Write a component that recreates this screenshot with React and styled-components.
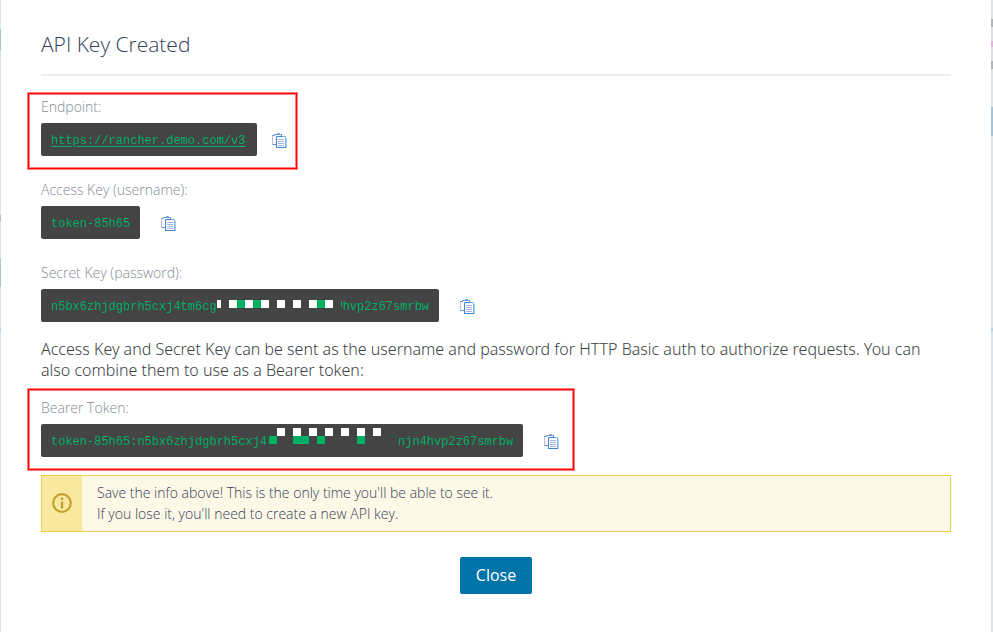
import React from "react";
import styled, { createGlobalStyle } from "styled-components";

const GlobalStyle = createGlobalStyle`
  *, *::before, *::after { box-sizing: border-box; }
  body {
    margin: 0;
    background: #dfe5e5;
    color: #3a3f44;
    font-family: "Open Sans", "Noto Sans", sans-serif;
    font-weight: 300;
  }
`;

const Backdrop = styled.div`
  display: grid;
  grid-template-columns: 1px minmax(0, 1fr) 2px;
  min-height: 100vh;
`;

const LeftEdge = styled.div`
  background: linear-gradient(
    #dfe5e5 29px, #a3c3d6 29px 50px, #d3e0e8 50px 58px, #dfe5e5 58px 180px,
    #e8e3c8 180px 183px, #dfe5e5 183px 215px, #b9babc 215px 221px,
    #dfe5e5 221px 258px, #a3c3d6 258px 287px, #dfe5e5 287px 328px,
    #b5d2e4 328px 331px, #dae3ea 331px 382px, #dfe5e5 382px
  );
`;

const RightEdge = styled.div`
  background: linear-gradient(
    #dfe5e5 19px, #aeb5ba 19px 27px, #dddde6 27px 41px, #dfb5df 41px 47px,
    #dddde6 47px 61px, #aeb5ba 61px 69px, #dfe5e5 69px 107px,
    #a3c3d6 107px 136px, #dfe5e5 136px 328px, #b5d2e4 328px 331px,
    #dae3ea 331px 382px, #dfe5e5 382px
  );
`;

const Modal = styled.main`
  display: flex;
  flex-direction: column;
  padding: 30px 40px 38px;
  background: #fff;
`;

const Title = styled.h1`
  margin: 0 0 17px;
  padding-bottom: 16px;
  border-bottom: 2px solid #eceeee;
  color: #35405a;
  font-size: 21px;
  line-height: 28px;
  font-weight: 300;
`;

const Field = styled.section`
  width: fit-content;
  margin: 0 -13px ${(p) => p.$gap || 7}px;
  padding: ${(p) => p.$top || 3}px ${(p) => p.$inset || 8}px 12px 12px;
  border: 1px solid ${(p) => (p.$marked ? "#ff0000" : "transparent")};
  box-shadow: ${(p) =>
    p.$marked ? "0 0 0 1px #ff8080, inset 0 0 0 1px #ff8080" : "none"};
`;

const Label = styled.h2`
  margin: 0 0 6px;
  color: #848c94;
  font-size: 14px;
  line-height: 20px;
  font-weight: 300;
`;

const Row = styled.div`
  display: flex;
  align-items: center;
  gap: ${(p) => (p.$tight ? 7 : 13)}px;
`;

const Code = styled.code`
  display: flex;
  align-items: center;
  height: 33px;
  padding: 2px 10px 0;
  border-radius: 2px;
  background: #444;
  color: #00ae66;
  font: 12px "Liberation Mono", monospace;
  white-space: nowrap;
`;

const CodeLink = styled.a`
  padding-right: 2px;
  color: inherit;
  text-underline-offset: 2px;
`;

const CopyButton = styled.button`
  display: flex;
  padding: 2px 8px 0;
  border: 0;
  background: none;
  cursor: pointer;
`;

const Hint = styled.p`
  margin: 0 0 8px;
  font-family: "Noto Sans", sans-serif;
  font-size: 16px;
  line-height: 21px;
`;

const Notice = styled.aside`
  display: flex;
  border: 1px solid #f0ce4c;
  background: #fdf9e6;
  color: #35405a;
`;

const NoticeIcon = styled.div`
  display: flex;
  align-items: center;
  justify-content: center;
  width: 40px;
  padding-bottom: 2px;
  background: #f9e8a0;
`;

const NoticeText = styled.p`
  margin: 0;
  padding: 6px 15px 7px;
  font-size: 14px;
  line-height: 21px;
`;

const CloseButton = styled.button`
  align-self: center;
  height: 37px;
  margin-top: 25px;
  padding: 0 16px 2px;
  border: 0;
  border-radius: 2px;
  background: #0074a8;
  color: #fff;
  font: 400 16px "Open Sans", sans-serif;
  cursor: pointer;
`;

function CopyIcon() {
  return (
    <svg width="15" height="15" viewBox="0 0 15 15" fill="none" aria-hidden="true">
      <path d="M4 11.5H.5v-9h2V1.500h7v2" stroke="#5a90dc" />
      <path d="M.5 3v8.500" stroke="#c6b4e2" />
      <path d="M4.500 1.500l1-1h2l1 1" stroke="#79a6dc" />
      <path d="M4 3h7l3.500 2v10H4z" fill="#fff" />
      <path d="M4.500 15V3.500H11" stroke="#3e86d4" />
      <path d="M10.500 3.500h3V14" stroke="#78b4ee" />
      <path d="M14.500 5v10" stroke="#a8d2f5" />
      <path d="M4 14.500h10" stroke="#3e86d4" />
      <path d="M6 6.500h6M6 8.500h6M6 10.500h6M6 12.500h6" stroke="#a5aedb" />
    </svg>
  );
}

function Copy({ label }) {
  return (
    <CopyButton type="button" aria-label={label}>
      <CopyIcon />
    </CopyButton>
  );
}

const cell = (fill, y) => (x) => (
  <rect key={`${x}-${y}`} x={x} y={y} width="8" height="8" fill={fill} />
);

function SecretMask() {
  return (
    <svg width="126" height="31" viewBox="217 291 126 31" shapeRendering="crispEdges" aria-hidden="true">
      {[213, 229, 245, 261, 277, 293, 309, 325].map(cell("#fff", 300))}
      {[237, 253, 317].map(cell("#00ae66", 300))}
      <path d="M341.500 301v6" stroke="#00ae66" />
    </svg>
  );
}

function TokenMask() {
  return (
    <svg width="131" height="31" viewBox="267 426 131 31" shapeRendering="crispEdges" aria-hidden="true">
      {[277, 293, 309, 325, 341, 357, 373].map(cell("#fff", 428))}
      {[269, 293, 301, 317, 357].map(cell("#00ae66", 436))}
      <path d="M390 436.500h3M395 436.500h3" stroke="#176c49" />
    </svg>
  );
}

export default function App() {
  return (
    <Backdrop>
      <GlobalStyle />
      <LeftEdge />
      <Modal>
        <Title>API Key Created</Title>
        <Field $marked $inset={1}>
          <Label>Endpoint:</Label>
          <Row $tight>
            <Code>
              <CodeLink href="https://rancher.demo.com/v3">https://rancher.demo.com/v3</CodeLink>
            </Code>
            <Copy label="Copy endpoint" />
          </Row>
        </Field>
        <Field>
          <Label>Access Key (username):</Label>
          <Row>
            <Code>token-85h65</Code>
            <Copy label="Copy access key" />
          </Row>
        </Field>
        <Field $gap={4}>
          <Label>Secret Key (password):</Label>
          <Row>
            <Code>
              n5bx6zhjdgbrh5cxj4tm6cg
              <SecretMask />
              hvp2z67smrbw
            </Code>
            <Copy label="Copy secret key" />
          </Row>
        </Field>
        <Hint>
          Access Key and Secret Key can be sent as the username and password for HTTP Basic
          auth to authorize requests. You can also combine them to use as a Bearer token:
        </Hint>
        <Field $marked $inset={6} $top={8} $gap={5}>
          <Label>Bearer Token:</Label>
          <Row>
            <Code>
              token-85h65:n5bx6zhjdgbrh5cxj4
              <TokenMask />
              njn4hvp2z67smrbw
            </Code>
            <Copy label="Copy bearer token" />
          </Row>
        </Field>
        <Notice>
          <NoticeIcon>
            <svg width="20" height="20" viewBox="0 0 20 20" fill="none" aria-hidden="true">
              <circle cx="10" cy="10" r="8.800" stroke="#c3a22e" strokeWidth="2.200" />
              <path d="M10 8.500v7M10 4.500v2.400" stroke="#c3a22e" strokeWidth="2.400" />
            </svg>
          </NoticeIcon>
          <NoticeText>
            Save the info above! This is the only time you'll be able to see it.
            <br />
            If you lose it, you'll need to create a new API key.
          </NoticeText>
        </Notice>
        <CloseButton type="button">Close</CloseButton>
      </Modal>
      <RightEdge />
    </Backdrop>
  );
}
